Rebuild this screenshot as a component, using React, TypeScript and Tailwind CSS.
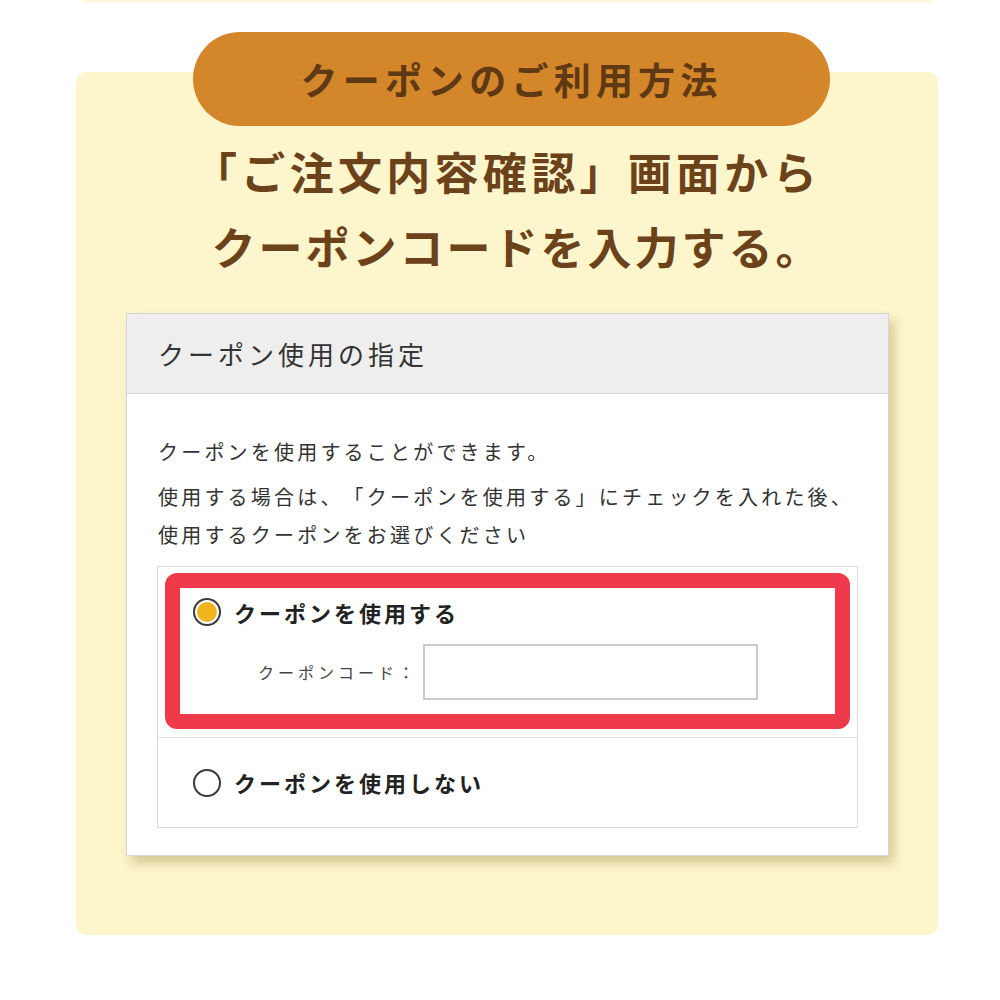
import React from "react";

const jp = { fontFamily: '"Noto Sans CJK JP", "Noto Sans", sans-serif' };

function Radio({ checked }: { checked: boolean }) {
  return (
    <div className="w-[28px] h-[28px] rounded-full border-2 border-[#3a3a3a] bg-white flex items-center justify-center shrink-0">
      {checked && <div className="w-[20px] h-[20px] rounded-full bg-[#f2b41c]" />}
    </div>
  );
}

export default function App() {
  return (
    <div className="w-[1000px] h-[1000px] bg-white flex flex-col [text-spacing-trim:space-all]" style={jp}>
      <div className="ml-[82px] w-[852px] h-[3px] bg-[#fdf8e0] rounded-b-[6px]" />
      <div className="mt-[69px] ml-[76px] w-[862px] h-[863px] bg-[#fdf5cc] rounded-[10px] flex flex-col">
        <div className="-mt-[40px] ml-[117px] w-[637px] h-[94px] rounded-full bg-[#d3862a] flex items-center justify-center">
          <span className="text-[37px] font-bold tracking-[5.2px] text-[#5e3913] leading-none">クーポンのご利用方法</span>
        </div>
        <div className="mt-[8px] text-center text-[44px] leading-[75px] font-bold text-[#6b4219]">
          <div className="tracking-[4.3px]">「ご注文内容確認」画面から</div>
          <div className="tracking-[3px] pl-[20px]">クーポンコードを入力する。</div>
        </div>
        <div className="mt-[29px] ml-[50px] w-[763px] bg-white border border-[#d6d6d6] shadow-[5px_7px_10px_rgba(140,120,50,0.35)] flex flex-col">
          <div className="h-[80px] bg-[#eeeeee] border-b border-[#dadada] flex items-center pl-[31px]">
            <span className="text-[26px] tracking-[4px] text-[#333]">クーポン使用の指定</span>
          </div>
          <div className="pt-[39px] pb-[27px] flex flex-col">
            <div className="pl-[31px] text-[20px] leading-[38px] tracking-[3.2px] text-[#333]">
              <p>クーポンを使用することができます。</p>
              <p className="mt-[7px]">使用する場合は、「クーポンを使用する」にチェックを入れた後、<br />使用するクーポンをお選びください</p>
            </div>
            <div className="mt-[12px] ml-[30px] w-[701px] border border-[#dcdcdc] flex flex-col">
              <div className="pt-[6px] px-[7px] pb-[8px] border-b border-[#e2e2e2]">
                <div className="border-[15px] border-[#ef3a4c] rounded-[12px] pt-[10px] pl-[13px] pb-[14px] flex flex-col">
                  <div className="h-[28px] flex items-center">
                    <Radio checked={true} />
                    <span className="ml-[13px] text-[22px] font-bold tracking-[3px] text-[#222]">クーポンを使用する</span>
                  </div>
                  <div className="mt-[18px] pl-[65px] flex items-center">
                    <div className="w-[165px] text-[16px] tracking-[4px] text-[#444]">クーポンコード：</div>
                    <div className="w-[335px] h-[56px] border-2 border-[#cccccc] bg-white" />
                  </div>
                </div>
              </div>
              <div className="h-[89px] pl-[35px] flex items-center">
                <Radio checked={false} />
                <span className="ml-[13px] text-[22px] font-bold tracking-[3px] text-[#222]">クーポンを使用しない</span>
              </div>
            </div>
          </div>
        </div>
      </div>
    </div>
  );
}
